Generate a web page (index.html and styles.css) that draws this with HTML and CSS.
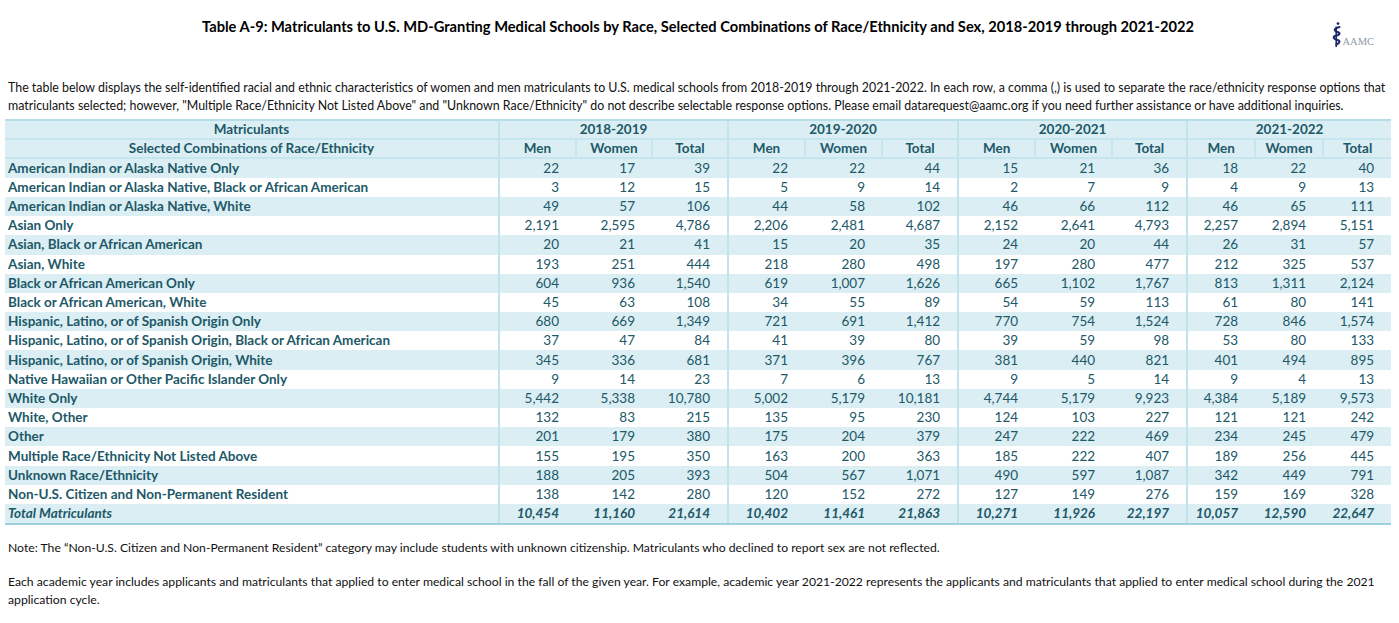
FILE: index.html
```html
<!DOCTYPE html>
<html lang="en">
<head>
<meta charset="utf-8">
<title>Table A-9</title>
<link rel="stylesheet" href="styles.css">
</head>
<body>
<div class="page">
  <header class="top">
    <div class="spacer"></div>
    <h1 class="title">Table A-9: Matriculants to U.S. MD-Granting Medical Schools by Race, Selected Combinations of Race/Ethnicity and Sex, 2018-2019 through 2021-2022</h1>
    <div class="logo">
      <svg class="logo-mark" width="10" height="26" viewBox="0 0 10 26" aria-hidden="true">
        <circle cx="6" cy="1.6" r="1.4" fill="#1d2b6e"/>
        <path d="M4.2 4.5 L4.2 25" stroke="#1d2b6e" stroke-width="1.6" fill="none"/>
        <path d="M7.5 5 C2 6.5 1 8.5 5.5 10 C9 11.3 8 13 3 14 C0.5 15 1.5 17 5.5 18 C8.5 19 8 21 4.5 22.5" stroke="#1d2b6e" stroke-width="2" fill="none" stroke-linecap="round"/>
      </svg>
      <span class="logo-text">AAMC</span>
    </div>
  </header>

  <p class="intro">The table below displays the self-identified racial and ethnic characteristics of women and men matriculants to U.S. medical schools from 2018-2019 through 2021-2022. In each row, a comma (,) is used to separate the race/ethnicity response options that<br>matriculants selected; however, "Multiple Race/Ethnicity Not Listed Above" and "Unknown Race/Ethnicity" do not describe selectable response options. Please email datarequest@aamc.org if you need further assistance or have additional inquiries.</p>

  <table class="data">
    <colgroup>
      <col class="c-label">
      <col class="c77"><col class="c76"><col class="c76">
      <col class="c77"><col class="c77"><col class="c76">
      <col class="c77"><col class="c77"><col class="c75">
      <col class="c68"><col class="c68"><col class="c68">
    </colgroup>
    <thead>
      <tr class="h1">
        <th class="lbl-h">Matriculants</th>
        <th colspan="3" class="grp">2018-2019</th>
        <th colspan="3" class="grp">2019-2020</th>
        <th colspan="3" class="grp">2020-2021</th>
        <th colspan="3" class="grp">2021-2022</th>
      </tr>
      <tr class="h2">
        <th class="lbl-h">Selected Combinations of Race/Ethnicity</th>
        <th class="gs">Men</th><th class="sub">Women</th><th class="sub">Total</th>
        <th class="gs">Men</th><th class="sub">Women</th><th class="sub">Total</th>
        <th class="gs">Men</th><th class="sub">Women</th><th class="sub">Total</th>
        <th class="gs">Men</th><th class="sub">Women</th><th class="sub">Total</th>
      </tr>
    </thead>
    <tbody>
      <tr><td class="lbl">American Indian or Alaska Native Only</td><td class="gs">22</td><td>17</td><td>39</td><td class="gs">22</td><td>22</td><td>44</td><td class="gs">15</td><td>21</td><td>36</td><td class="gs">18</td><td>22</td><td>40</td></tr>
      <tr><td class="lbl">American Indian or Alaska Native, Black or African American</td><td class="gs">3</td><td>12</td><td>15</td><td class="gs">5</td><td>9</td><td>14</td><td class="gs">2</td><td>7</td><td>9</td><td class="gs">4</td><td>9</td><td>13</td></tr>
      <tr><td class="lbl">American Indian or Alaska Native, White</td><td class="gs">49</td><td>57</td><td>106</td><td class="gs">44</td><td>58</td><td>102</td><td class="gs">46</td><td>66</td><td>112</td><td class="gs">46</td><td>65</td><td>111</td></tr>
      <tr><td class="lbl">Asian Only</td><td class="gs">2,191</td><td>2,595</td><td>4,786</td><td class="gs">2,206</td><td>2,481</td><td>4,687</td><td class="gs">2,152</td><td>2,641</td><td>4,793</td><td class="gs">2,257</td><td>2,894</td><td>5,151</td></tr>
      <tr><td class="lbl">Asian, Black or African American</td><td class="gs">20</td><td>21</td><td>41</td><td class="gs">15</td><td>20</td><td>35</td><td class="gs">24</td><td>20</td><td>44</td><td class="gs">26</td><td>31</td><td>57</td></tr>
      <tr><td class="lbl">Asian, White</td><td class="gs">193</td><td>251</td><td>444</td><td class="gs">218</td><td>280</td><td>498</td><td class="gs">197</td><td>280</td><td>477</td><td class="gs">212</td><td>325</td><td>537</td></tr>
      <tr><td class="lbl">Black or African American Only</td><td class="gs">604</td><td>936</td><td>1,540</td><td class="gs">619</td><td>1,007</td><td>1,626</td><td class="gs">665</td><td>1,102</td><td>1,767</td><td class="gs">813</td><td>1,311</td><td>2,124</td></tr>
      <tr><td class="lbl">Black or African American, White</td><td class="gs">45</td><td>63</td><td>108</td><td class="gs">34</td><td>55</td><td>89</td><td class="gs">54</td><td>59</td><td>113</td><td class="gs">61</td><td>80</td><td>141</td></tr>
      <tr><td class="lbl">Hispanic, Latino, or of Spanish Origin Only</td><td class="gs">680</td><td>669</td><td>1,349</td><td class="gs">721</td><td>691</td><td>1,412</td><td class="gs">770</td><td>754</td><td>1,524</td><td class="gs">728</td><td>846</td><td>1,574</td></tr>
      <tr><td class="lbl">Hispanic, Latino, or of Spanish Origin, Black or African American</td><td class="gs">37</td><td>47</td><td>84</td><td class="gs">41</td><td>39</td><td>80</td><td class="gs">39</td><td>59</td><td>98</td><td class="gs">53</td><td>80</td><td>133</td></tr>
      <tr><td class="lbl">Hispanic, Latino, or of Spanish Origin, White</td><td class="gs">345</td><td>336</td><td>681</td><td class="gs">371</td><td>396</td><td>767</td><td class="gs">381</td><td>440</td><td>821</td><td class="gs">401</td><td>494</td><td>895</td></tr>
      <tr><td class="lbl">Native Hawaiian or Other Pacific Islander Only</td><td class="gs">9</td><td>14</td><td>23</td><td class="gs">7</td><td>6</td><td>13</td><td class="gs">9</td><td>5</td><td>14</td><td class="gs">9</td><td>4</td><td>13</td></tr>
      <tr><td class="lbl">White Only</td><td class="gs">5,442</td><td>5,338</td><td>10,780</td><td class="gs">5,002</td><td>5,179</td><td>10,181</td><td class="gs">4,744</td><td>5,179</td><td>9,923</td><td class="gs">4,384</td><td>5,189</td><td>9,573</td></tr>
      <tr><td class="lbl">White, Other</td><td class="gs">132</td><td>83</td><td>215</td><td class="gs">135</td><td>95</td><td>230</td><td class="gs">124</td><td>103</td><td>227</td><td class="gs">121</td><td>121</td><td>242</td></tr>
      <tr><td class="lbl">Other</td><td class="gs">201</td><td>179</td><td>380</td><td class="gs">175</td><td>204</td><td>379</td><td class="gs">247</td><td>222</td><td>469</td><td class="gs">234</td><td>245</td><td>479</td></tr>
      <tr><td class="lbl">Multiple Race/Ethnicity Not Listed Above</td><td class="gs">155</td><td>195</td><td>350</td><td class="gs">163</td><td>200</td><td>363</td><td class="gs">185</td><td>222</td><td>407</td><td class="gs">189</td><td>256</td><td>445</td></tr>
      <tr><td class="lbl">Unknown Race/Ethnicity</td><td class="gs">188</td><td>205</td><td>393</td><td class="gs">504</td><td>567</td><td>1,071</td><td class="gs">490</td><td>597</td><td>1,087</td><td class="gs">342</td><td>449</td><td>791</td></tr>
      <tr><td class="lbl">Non-U.S. Citizen and Non-Permanent Resident</td><td class="gs">138</td><td>142</td><td>280</td><td class="gs">120</td><td>152</td><td>272</td><td class="gs">127</td><td>149</td><td>276</td><td class="gs">159</td><td>169</td><td>328</td></tr>
      <tr class="total"><td class="lbl">Total Matriculants</td><td class="gs">10,454</td><td>11,160</td><td>21,614</td><td class="gs">10,402</td><td>11,461</td><td>21,863</td><td class="gs">10,271</td><td>11,926</td><td>22,197</td><td class="gs">10,057</td><td>12,590</td><td>22,647</td></tr>
    </tbody>
  </table>

  <p class="note first">Note: The “Non-U.S. Citizen and Non-Permanent Resident” category may include students with unknown citizenship. Matriculants who declined to report sex are not reflected.</p>
  <p class="note">Each academic year includes applicants and matriculants that applied to enter medical school in the fall of the given year. For example, academic year 2021-2022 represents the applicants and matriculants that applied to enter medical school during the 2021<br>application cycle.</p>
</div>
</body>
</html>
```
FILE: styles.css
```css
html, body {
  margin: 0;
  padding: 0;
  background: #ffffff;
}

body {
  font-family: Lato, "Open Sans", "Liberation Sans", sans-serif;
  color: #111111;
}

.page {
  padding: 0 8px 0 5px;
}

.top {
  display: grid;
  grid-template-columns: 1fr auto 1fr;
  align-items: start;
  height: 79px;
}

.title {
  margin: 17px 0 0;
  font-size: 14.67px;
  line-height: 20px;
  font-weight: 700;
  color: #000000;
  white-space: nowrap;
}

.logo {
  justify-self: end;
  margin: 22px 17px 0 0;
  display: flex;
  align-items: flex-end;
  gap: 0;
}

.logo-mark {
  display: block;
}

.logo-text {
  font-family: "Liberation Serif", serif;
  font-size: 10.5px;
  line-height: 11px;
  color: #8e9aa6;
  margin-bottom: 1px;
}

.intro {
  margin: 0 0 4px 3px;
  font-size: 12.4px;
  line-height: 18px;
  white-space: nowrap;
}

.data {
  border-collapse: collapse;
  table-layout: fixed;
  width: 1386px;
  font-size: 13.5px;
  color: #215868;
}

.c-label { width: 494px; }
.c77 { width: 77px; }
.c76 { width: 76px; }
.c75 { width: 75px; }
.c68 { width: 68px; }

.data th {
  background: #daeef3;
  font-weight: 700;
  padding: 0;
  height: 16.8px;
  line-height: 16px;
  text-align: center;
  border-bottom: 2px solid #c6e6ef;
}

.data .h1 th {
  border-top: 2px solid #b7dde8;
}

.data th.lbl-h,
.data td.lbl {
  border-right: 2px solid #c3e3ec;
}

.data th.grp,
.data th.gs,
.data td.gs {
  border-left: 2px solid #c3e3ec;
}

.data th.sub {
  border-left: 2px solid #c6e6ef;
}

.data td {
  padding: 0 17px 0 0;
  height: 19.2px;
  line-height: 17px;
  text-align: right;
  white-space: nowrap;
}

.data td.lbl {
  text-align: left;
  font-weight: 700;
  padding: 0 0 0 3px;
}

.data tbody tr:nth-child(odd) td {
  background: #daeef3;
}

.data tr.total td {
  font-weight: 700;
  font-style: italic;
  border-bottom: 2px solid #9dd1df;
}

.note {
  margin: 16px 0 0 3px;
  font-size: 12.2px;
  line-height: 18px;
}

.note.first {
  margin-top: 14px;
}
```
